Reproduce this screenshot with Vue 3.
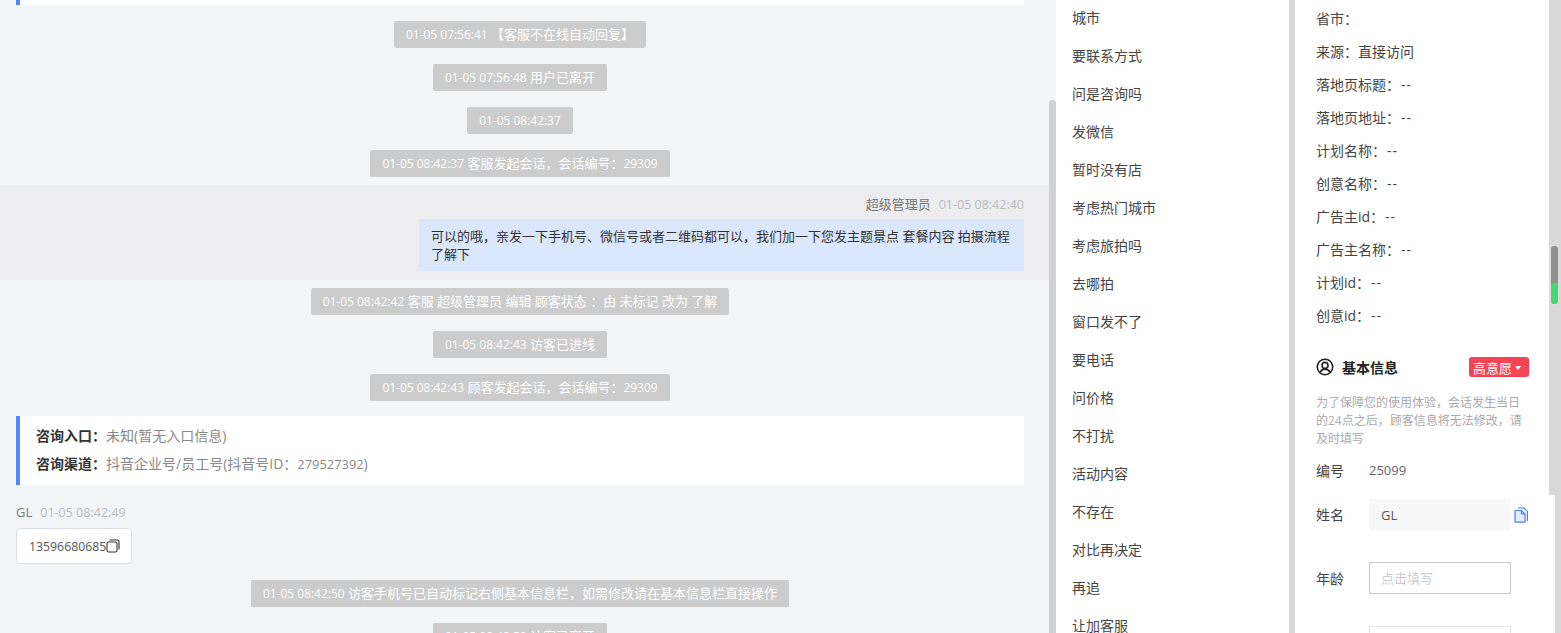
<script setup>
const topNotes = [
  '01-05 07:56:41 【客服不在线自动回复】',
  '01-05 07:56:48 用户已离开',
  '01-05 08:42:37',
  '01-05 08:42:37 客服发起会话，会话编号：29309'
]
const midNotes = [
  '01-05 08:42:42 客服 超级管理员 编辑 顾客状态 ：由 未标记 改为 了解',
  '01-05 08:42:43 访客已进线',
  '01-05 08:42:43 顾客发起会话，会话编号：29309'
]
const lowNotes = [
  '01-05 08:42:50 访客手机号已自动标记右侧基本信息栏，如需修改请在基本信息栏直接操作',
  '01-05 08:42:50 访客已离开'
]
const tags = ['城市', '要联系方式', '问是咨询吗', '发微信', '暂时没有店', '考虑热门城市', '考虑旅拍吗', '去哪拍', '窗口发不了', '要电话', '问价格', '不打扰', '活动内容', '不存在', '对比再决定', '再追', '让加客服']
const visit = [
  ['省市：', ''],
  ['来源：', '直接访问'],
  ['落地页标题：', '--'],
  ['落地页地址：', '--'],
  ['计划名称：', '--'],
  ['创意名称：', '--'],
  ['广告主id：', '--'],
  ['广告主名称：', '--'],
  ['计划id：', '--'],
  ['创意id：', '--']
]

// 数字部分单独缩小，接近原图的窄字形
const parts = (s) => s.split(/([\d:-]+(?: [\d:-]+)?)/)
</script>

<template>
  <div class="page">
    <div class="chat">
      <div class="chat-list">
        <div class="card-end"></div>
        <div class="notes first">
          <div v-for="n in topNotes" :key="n" class="note"><span v-for="(p, i) in parts(n)" :key="i" :class="{ lat: i % 2 }">{{ p }}</span></div>
        </div>
        <div class="agent-row">
          <div class="meta right">超级管理员<span class="time">01-05 08:42:40</span></div>
          <div class="bubble-out">可以的哦，亲发一下手机号、微信号或者二维码都可以，我们加一下您发主题景点 套餐内容 拍摄流程了解下</div>
        </div>
        <div class="notes">
          <div v-for="n in midNotes" :key="n" class="note"><span v-for="(p, i) in parts(n)" :key="i" :class="{ lat: i % 2 }">{{ p }}</span></div>
        </div>
        <div class="entry-card">
          <p><b>咨询入口：</b>未知(暂无入口信息)</p>
          <p><b>咨询渠道：</b>抖音企业号/员工号(抖音号ID：<span class="lat">279527392</span>)</p>
        </div>
        <div class="meta">GL<span class="time">01-05 08:42:49</span></div>
        <div class="bubble-in">
          13596680685
          <svg width="14" height="14" viewBox="0 0 14 14" fill="none" stroke="#333" stroke-width="1.1">
            <rect x="1" y="3" width="10" height="10" rx="1.5" />
            <path d="M3.5 1h8a1.500 1.500 0 0 1 1.500 1.500v8" />
          </svg>
        </div>
        <div class="notes last">
          <div v-for="n in lowNotes" :key="n" class="note"><span v-for="(p, i) in parts(n)" :key="i" :class="{ lat: i % 2 }">{{ p }}</span></div>
        </div>
      </div>
      <div class="chat-scroll"><div class="chat-thumb"></div></div>
    </div>

    <div class="tags">
      <div v-for="t in tags" :key="t" class="tag">{{ t }}</div>
    </div>

    <div class="side">
      <div class="side-body">
        <div v-for="r in visit" :key="r[0]" class="visit-row">{{ r[0] }}<span :class="{ dash: r[1] === '--' }">{{ r[1] }}</span></div>

        <div class="base-head">
          <svg class="user-icon" width="18" height="18" viewBox="0 0 18 18" fill="none" stroke="#222" stroke-width="1.600">
            <circle cx="9" cy="9" r="7.700" />
            <circle cx="9" cy="7.400" r="3" />
            <path d="M4 14.300c.9-2 2.800-3 5-3s4.100 1 5 3" />
          </svg>
          <span class="base-title">基本信息</span>
          <span class="level">高意愿<i class="caret"></i></span>
        </div>
        <p class="hint">为了保障您的使用体验，会话发生当日的24点之后，顾客信息将无法修改，请及时填写</p>
        <div class="field plain"><label>编号</label><span>25099</span></div>
        <div class="field name-field">
          <label>姓名</label>
          <div class="input filled">GL</div>
          <svg class="doc-icon" width="14" height="16" viewBox="0 0 14 16" fill="none" stroke="#4a7fe8" stroke-width="1.200">
            <path d="M4 1h6l3.400 3.400V14" />
            <path d="M1 3.500h6.500L11 7v7.500a.6.6 0 0 1-.6.6H1.600a.6.6 0 0 1-.6-.6z" fill="#e4ecfc" />
            <path d="M7.500 3.500V7H11" />
          </svg>
        </div>
        <div class="field age-field"><label>年龄</label><div class="input empty">点击填写</div></div>
        <div class="field next-field"><label></label><div class="input next"></div></div>
      </div>
      <div class="side-scroll">
        <div class="side-track"><div class="side-thumb"></div></div>
        <div class="side-low"></div>
      </div>
    </div>
  </div>
</template>

<style>
html, body {
  margin: 0;
  height: 100%;
  overflow: hidden;
}
</style>

<style scoped>
.page {
  display: flex;
  width: 1561px;
  height: 633px;
  overflow: hidden;
  background: #fff;
  font-family: "Open Sans", "Noto Sans CJK SC", sans-serif;
  font-size: 13px;
  color: #333;
}

.chat {
  display: flex;
  width: 1056px;
  flex-shrink: 0;
  background: #f4f5f7;
}
.chat-list {
  width: 1049px;
  height: 633px;
  overflow: hidden;
}
.chat-scroll {
  width: 7px;
  padding-top: 100px;
  box-sizing: border-box;
}
.chat-thumb {
  height: 533px;
  background: #d2d2d2;
  border-radius: 3px 3px 0 0;
}
.card-end {
  height: 5px;
  margin: 0 25px 0 16px;
  background: #fff;
  border-left: 4px solid #4c88f7;
  box-sizing: border-box;
}
.notes {
  display: flex;
  flex-direction: column;
  align-items: center;
  gap: 16px;
  margin-left: 16px;
  margin-right: 25px;
  padding-top: 8px;
}
.notes.first {
  padding-top: 16px;
  padding-bottom: 8px;
}
.notes.last {
  padding-top: 16px;
}
.note {
  height: 27px;
  line-height: 27px;
  padding: 0 12px;
  background: #ccc;
  color: #fff;
  border-radius: 2px;
  white-space: nowrap;
}
.lat {
  font-size: 0.92em;
}
.agent-row {
  height: 95px;
  box-sizing: border-box;
  padding: 9px 25px 0 16px;
  background: #ededef;
}
.meta {
  height: 20px;
  line-height: 20px;
  color: #777;
}
.meta.right {
  text-align: right;
}
.time {
  margin-left: 8px;
  font-size: 12.500px;
  color: #bbb;
}
.bubble-out {
  width: 605px;
  box-sizing: border-box;
  margin: 5px 0 0 auto;
  padding: 8px 12px;
  line-height: 18px;
  background: #dbe7fc;
  color: #333;
  border-radius: 2px;
}
.entry-card {
  height: 69px;
  box-sizing: border-box;
  margin: 15px 25px 0 16px;
  padding: 6px 0 0 16px;
  background: #fff;
  border-left: 4px solid #4c88f7;
  font-size: 14px;
  color: #888;
}
.entry-card p {
  margin: 0;
  height: 28px;
  line-height: 28px;
}
.entry-card b {
  color: #333;
  font-weight: 700;
}
.chat-list > .meta {
  margin: 17px 0 0 16px;
}
.bubble-in {
  display: inline-flex;
  align-items: center;
  height: 36px;
  box-sizing: border-box;
  margin: 6px 0 0 16px;
  padding: 0 11px 0 12px;
  background: #fff;
  border: 1px solid #dcdfe6;
  border-radius: 4px;
  font-size: 12.300px;
  color: #555;
}

.tags {
  width: 233px;
  flex-shrink: 0;
  height: 633px;
  overflow: hidden;
  padding-left: 16px;
  box-sizing: border-box;
  font-size: 14px;
}
.tag {
  height: 38px;
  line-height: 36px;
  color: #444;
}

.side {
  display: flex;
  flex: 1;
  border-left: 6px solid #d8d8d8;
}
.side-body {
  width: 254px;
  flex-shrink: 0;
  box-sizing: border-box;
  padding: 2px 20px 0 21px;
  height: 633px;
  overflow: hidden;
}
.visit-row {
  height: 33px;
  line-height: 33px;
  font-size: 14px;
  color: #444;
}
.dash {
  margin-left: 1px;
  letter-spacing: 1px;
}
.base-head {
  display: flex;
  align-items: center;
  height: 20px;
  margin-top: 25px;
}
.user-icon {
  flex-shrink: 0;
}
.base-title {
  margin-left: 8px;
  font-size: 14px;
  font-weight: 700;
  color: #222;
}
.level {
  display: flex;
  align-items: center;
  box-sizing: border-box;
  width: 60px;
  height: 20px;
  padding-left: 4px;
  margin-left: auto;
  background: #f44455;
  color: #fff;
  border-radius: 3px;
}
.caret {
  margin: 1px 0 0 3px;
  border: 3.500px solid transparent;
  border-top: 4px solid #fff;
  border-bottom: 0;
}
.hint {
  margin: 17px 0 0;
  width: 214px;
  font-size: 12px;
  line-height: 18px;
  color: #aaa;
}
.field {
  display: flex;
  align-items: center;
}
.field label {
  width: 53px;
  flex-shrink: 0;
  font-size: 14px;
  color: #444;
}
.plain {
  height: 20px;
  margin-top: 12px;
  color: #666;
}
.name-field {
  margin-top: 19px;
}
.name-field label {
  margin-top: -2px;
}
.age-field {
  margin-top: 31px;
}
.next-field {
  margin-top: 32px;
}
.input {
  width: 142px;
  height: 32px;
  line-height: 30px;
  box-sizing: border-box;
  padding: 0 11px;
  border: 1px solid transparent;
}
.filled {
  background: #f8f8f8;
  color: #555;
}
.empty {
  border-color: #ccc;
  color: #ccc;
}
.next {
  border-color: #e6e6e6;
}
.doc-icon {
  margin-left: 3px;
}
.side-scroll {
  flex: 1;
  display: flex;
  flex-direction: column;
}
.side-track {
  height: 495px;
  background: #d8d8d8;
  padding-top: 246px;
  box-sizing: border-box;
}
.side-thumb {
  width: 7px;
  height: 58px;
  margin-left: 2px;
  border-radius: 3px;
  background: linear-gradient(#8f8f8f 0, #8f8f8f 62%, #46d672 66%, #46d672 100%);
  box-shadow: 0 0 2px rgba(255, 255, 255, 0.6);
}
.side-low {
  flex: 1;
  margin-left: 6px;
  background: #d8d8d8;
}
</style>
